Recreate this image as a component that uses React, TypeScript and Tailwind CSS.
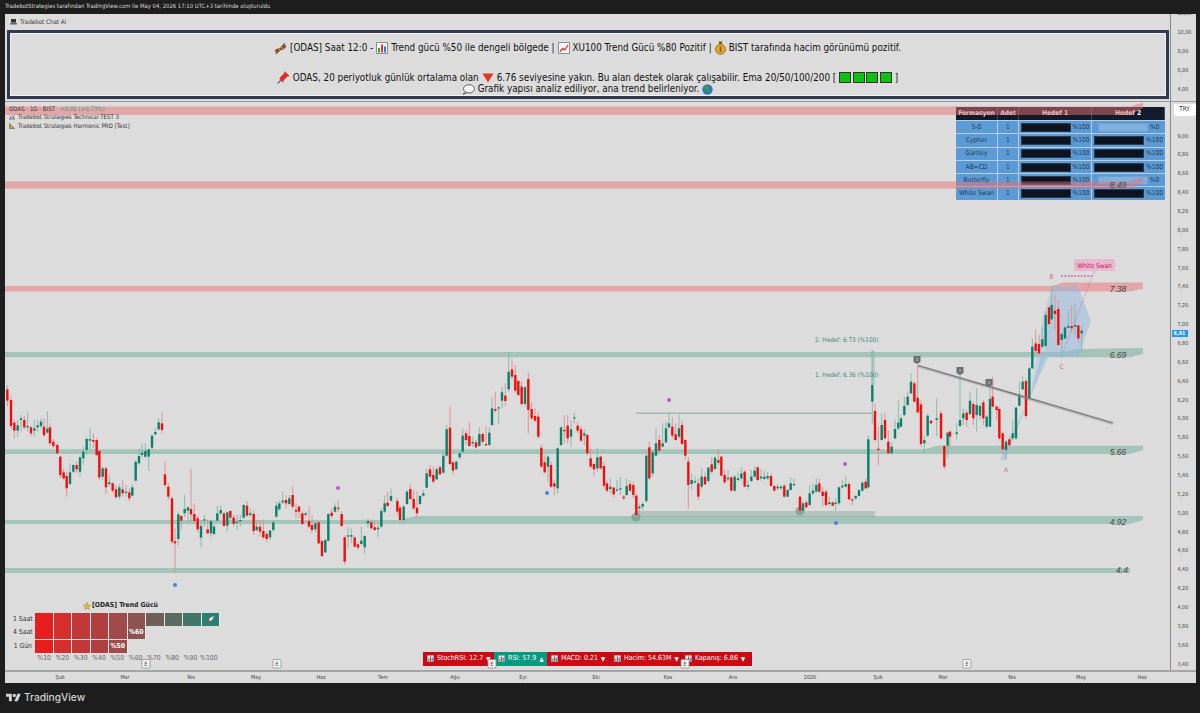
type Candle = [number, number, number, number, number?, number?];

// zx, top, bottom, red(1)/green(0), wick top, wick bottom (in zoom coords, 3x)
const partA: Candle[] = [
  [22,148,182,1,135,200],[33,180,258,1],[43,248,272,1,240,295],[53,256,272,0,240,292],[63,235,240,0,225,275],[73,240,262,1],[83,258,262,0,215,275],[93,262,280,1],[103,265,272,0,240,290],[113,256,262,0,240,275],[123,245,258,0,235,265],[132,260,286,1,235,290],[142,266,278,0,213,280],[150,262,310,1],[160,305,318,1],[172,315,340,1],[181,350,405,1],[191,397,415,1],[200,408,445,1,395,470],[210,397,432,0,370,435],[220,375,395,0],[230,375,388,1,365,400],[240,352,395,0,345,410],[250,335,355,0,318,375],[260,297,330,0,290,345],[270,297,302,0,263,330],[280,300,305,1,280,325],[290,300,345,1],[298,333,412,1],[308,385,410,0,380,420],[318,385,442,1,380,462],[328,427,432,0,405,440],[338,430,452,1],[348,448,472,1],[358,442,470,0],[368,448,460,1,420,470],[378,455,458,0,435,470],[388,457,475,1],[397,442,467,0,432,470],[407,366,422,0],[417,348,370,0,325,375],[426,338,345,0,310,352],[436,333,350,0,310,355],[446,328,350,0,325,392],[456,287,323,0],[466,276,283,0],[476,247,268,0,235,272],[486,250,270,1,215,282],
  [495,403,435,1,363,440],[505,440,470,1],[516,475,605,1],[525,604,610,1,565,697],[535,523,597,0,515,615],[544,528,542,1,525,570],[554,507,520,0,465,530],[564,502,512,0,500,548],[573,507,523,1,385,545],[583,522,543,1,490,550],[593,535,568,1],[603,558,593,0,540,623],[613,538,540,0,525,560],[623,568,580,1,538,582],[633,543,580,0,540,590],[642,560,582,0],[652,520,542,0,498,545],[662,510,520,0,497,525],[672,520,558,1,515,560],[682,517,557,0,515,575],[691,513,533,1],[701,533,552,1,525,560],[711,545,546,0,525,570],[721,540,542,0,525,560],[731,495,533,0],[741,497,527,1,482,530],[751,520,525,0,505,530],[761,522,573,1,510,585],[770,560,570,0,540,575],[780,560,575,1,540,590],[790,573,592,1,538,598],[800,582,597,1,575,607],[810,572,592,0,570,600],[820,547,570,0,540,575],[829,497,530,0,485,535],[838,490,508,0,483,512],[848,482,487,0,455,492],[858,480,490,1,465,505],[868,475,492,0,465,495],[878,465,500,1,438,505],[888,510,515,1,490,535],[897,500,515,1,497,535],[907,520,552,1,515,555],[917,520,525,0,515,530],[927,543,560,1,500,565],[936,555,570,1,525,580],[946,550,568,0,545,575],[956,547,610,1,545,612],[966,603,648,1],[976,600,637,0,595,640],[985,522,602,0,520,605],[995,518,528,1,505,535],[1005,500,515,0,490,518],[1015,503,506,1,482,515],[1025,522,558,1],[1034,592,665,1],[1044,586,590,0,560,622],[1054,585,590,0,565,610],[1064,592,620,1,590,623],[1074,613,623,1],[1084,602,612,0,560,615],[1094,588,622,0,585,642],[1104,543,550,0,535,563],[1114,547,565,1,542,568],[1124,562,570,1,545,572],[1134,563,568,0,548,592],[1144,513,560,0],[1154,490,515,0,467,520],[1163,488,498,1,455,500],[1173,468,482,0,445,485],[1192,483,515,1],
];

const partB: Candle[] = [
  [0,503,540,1],[11,500,540,0,495,550],[21,455,492,0,450,495],[31,447,477,1,432,480],[41,477,505,1,450,510],[51,503,520,1,455,532],[60,468,492,0,465,495],[70,460,467,0,450,470],[80,400,443,0,385,445],[90,388,410,1,375,415],[100,405,425,1,380,430],[110,388,418,0,382,420],[120,382,403,1,375,405],[130,347,398,0,335,400],[140,268,347,0,255,350],[150,263,372,1,200,375],[159,367,392,1,365,405],[169,365,388,0,362,390],[179,340,352,0,335,358],[188,287,335,0,265,338],[198,280,300,1,270,315],[208,288,318,1,245,320],[218,306,310,0,290,320],[228,307,322,1,300,325],[238,282,318,0,262,320],[248,282,305,1,278,310],[258,312,316,1,258,318],[268,278,315,0,262,318],[276,205,255,0,172,258],[286,207,212,1,155,218],[296,202,205,0,198,252],[306,157,182,0,140,205],[316,167,183,1,130,198],[326,95,148,0,37,155],[336,88,110,1,58,118],[346,105,152,1,75,158],[355,123,165,1,120,168],[365,140,192,1,125,198],[375,142,192,0,138,200],[385,117,210,1,97,280],[395,207,235,1,188,240],[405,228,242,1,205,245],[415,230,290,1],
  [424,323,380,1],[434,367,397,1,345,400],[444,350,380,0,345,425],[453,375,440,1],[463,430,440,1,420,465],[473,325,445,0,322,462],[483,262,315,0],[493,270,272,1,225,310],[503,257,295,1,225,310],[513,268,290,0,240,320],[523,232,235,0,218,250],[533,257,272,1,245,280],[543,268,302,1],[553,280,287,0,268,315],[562,285,340,1],[572,355,380,1,325,385],[582,372,388,1,368,410],[592,352,385,0,325,395],[602,350,385,1],[612,378,437,1],[621,430,452,1],[631,440,447,0,415,460],[641,443,463,1],[651,448,450,0,420,455],[661,445,448,0,410,465],[671,470,475,1,465,480],[680,438,465,0,415,468],[690,432,452,1],[700,435,465,1],[709,467,525,1],[718,500,505,0,490,520],[728,492,500,0,485,510],[739,347,483,0],[748,322,415,1,305,420],[758,337,400,0],[768,310,347,0,265,350],[778,300,332,1,285,335],[788,310,320,0,250,322],[798,265,307,0,245,310],[807,250,262,0,218,265],[817,260,287,1,232,295],[827,283,300,1,250,302],[837,265,290,0,225,295],[846,255,312,1,240,315],[856,300,347,1,298,358],[865,365,435,1,350,505],[875,420,432,0,402,450],[885,423,427,0,408,432],[895,430,470,1,415,480],[905,410,440,0,385,445],[915,410,433,1,395,435],[925,383,423,0,380,428],[935,373,395,1,352,400],[945,353,387,0,348,390],[955,360,368,1,328,375],[964,350,407,1,348,410],[974,405,427,1,388,432],[984,413,418,0,390,425],[994,412,452,1,408,456],[1004,410,452,0,405,456],[1014,415,420,0,395,425],[1024,400,415,0,382,422],[1034,395,440,1,390,442],[1044,435,440,0,422,450],[1054,410,423,0,390,426],[1064,392,410,0,380,412],[1073,382,420,1,378,424],[1083,410,415,0,388,422],[1093,410,417,0,392,420],[1103,408,415,0,395,420],[1113,408,438,1,400,440],[1123,438,452,1,436,455],[1133,440,445,0,432,450],[1143,440,445,0,435,450],[1153,437,470,1,432,472],[1163,450,470,0,447,473],[1172,430,450,0,412,452],[1182,432,435,0,415,440],
];

const partC: Candle[] = [
  [60,80,122,1],[69,100,122,0,95,125],[79,97,112,1,92,115],[89,70,105,0,45,108],[99,62,70,0,40,75],[109,45,65,0,25,68],[118,40,65,1,25,68],[128,65,78,1,50,110],[138,65,105,1,60,110],[148,97,102,0,80,108],[158,97,107,1,95,110],[167,98,102,0,85,122],[177,52,100,0,50,105],[187,47,52,0,30,55],[197,42,50,0,18,52],[207,42,88,1],[217,88,90,1,85,105],[227,78,85,0,75,90],[237,60,78,0,58,80],[247,38,62,0,35,65],[257,35,55,1,25,58],
];

const partD: Candle[] = [
  [205,568,712,0],[217,405,455,0,300,520],[225,483,570,1,460,575],[235,596,600,1,530,648],[245,525,570,0,490,572],[255,510,565,1,488,568],[265,575,610,1,540,612],[275,590,610,0,575,612],[285,537,565,0,510,568],[295,518,535,0,450,540],[303,505,530,0,495,532],[313,468,495,0,440,498],[323,440,465,0,425,468],[333,395,430,0,370,432],[343,400,455,1,395,458],[353,443,487,1,345,490],[363,463,582,1],[373,570,580,0,560,610],[383,497,557,0,490,560],[393,512,520,1,510,522],[410,505,510,0,445,558],[423,490,565,1],[433,588,650,1,585,658],[443,548,587,0,545,625],[450,545,560,1,540,590],[470,547,552,0,518,568],[480,510,528,0,350,530],[490,490,505,0,475,525],[500,488,510,1,480,530],[510,452,492,0,425,495],[520,462,505,1,455,525],[530,465,495,0,415,545],[540,468,497,0,460,510],[550,457,505,1,450,525],[560,500,530,0,495,535],[570,447,530,0,415,532],[578,440,470,1,380,472],[590,470,480,1,465,510],[598,477,565,1],[608,550,598,1,545,610],[618,575,600,0,570,630],[628,568,585,1],[638,550,565,0,510,570],[648,473,565,0,470,570],[658,433,467,0,395,470],[668,395,418,0,380,420],[678,393,498,1],[688,355,445,0,350,450],[697,290,355,0,265,358],[707,280,303,1,238,315],[717,282,310,1,255,315],[727,268,290,0,230,295],[737,195,288,0,185,290],[747,172,222,1,170,225],[755,165,208,0,108,210],[765,182,192,1,135,240],[775,177,285,1,150,288],[785,252,270,0,248,320],[795,232,265,0,230,268],[805,228,233,0,180,235],[815,228,235,1,165,245],[825,225,230,0,160,255],[835,226,265,1,225,278],[845,242,250,0,228,307],
];

const candles = [
  ...partA.map((c) => ({ c, ox: 0, oy: 340 })),
  ...partB.map((c) => ({ c, ox: 400, oy: 340 })),
  ...partC.map((c) => ({ c, ox: 780, oy: 470 })),
  ...partD.map((c) => ({ c, ox: 800, oy: 250 })),
];

const priceLabels = ["9,00","8,80","8,60","8,40","8,20","8,00","7,80","7,60","7,40","7,20","7,00","6,80","6,60","6,40","6,20","6,00","5,80","5,60","5,40","5,20","5,00","4,80","4,60","4,40","4,20","4,00","3,80","3,60","3,40"];

const months = [
  { t: "Şub", c: "ml-[35px]" }, { t: "Mar", c: "ml-[25px]" }, { t: "Nis", c: "ml-[26px]" }, { t: "May", c: "ml-[25px]" },
  { t: "Haz", c: "ml-[25px]" }, { t: "Tem", c: "ml-[22px]" }, { t: "Ağu", c: "ml-[32px]" }, { t: "Eyl", c: "ml-[28px]" },
  { t: "Eki", c: "ml-[33px]" }, { t: "Kas", c: "ml-[32px]" }, { t: "Ara", c: "ml-[25px]" }, { t: "2026", c: "ml-[37px]" },
  { t: "Şub", c: "ml-[28px]" }, { t: "Mar", c: "ml-[25px]" }, { t: "Nis", c: "ml-[29px]" }, { t: "May", c: "ml-[29px]" }, { t: "Haz", c: "ml-[21px]" },
];

const patterns = [
  { name: "5-0", a: 100, b: 0 }, { name: "Cypher", a: 100, b: 100 }, { name: "Gartley", a: 100, b: 100 },
  { name: "AB=CD", a: 100, b: 100 }, { name: "Butterfly", a: 100, b: 0 }, { name: "White Swan", a: 100, b: 100 },
];

const heat = ["bg-[#e81e1e]", "bg-[#d42e2e]", "bg-[#c23838]", "bg-[#b04040]", "bg-[#a04a4a]", "bg-[#8a5450]", "bg-[#6f5f58]", "bg-[#5b6a60]", "bg-[#40766a]", "bg-[#2a8070]"];

const strip = [
  { t: "StochRSI: 12.7", up: false, w: "w-[71px]" },
  { t: "RSI: 57.9", up: true, w: "w-[53px]" },
  { t: "MACD: 0.21", up: false, w: "w-[63px]" },
  { t: "Hacim: 54.63M", up: false, w: "w-[71px]" },
  { t: "Kapanış: 6.86", up: false, w: "w-[71px]" },
];

const BarsIcon = ({ s = 12 }: { s?: number }) => (
  <svg width={s} height={s} viewBox="0 0 12 12" className="shrink-0">
    <rect x="0.5" y="0.5" width="11" height="11" fill="#f4f4f4" stroke="#8a8f99" />
    <rect x="2" y="6" width="2" height="4.5" fill="#2eaa3a" />
    <rect x="5" y="2.5" width="2" height="8" fill="#e5342e" />
    <rect x="8" y="4.5" width="2" height="6" fill="#2f7fd8" />
  </svg>
);

const TrendIcon = () => (
  <svg width="12" height="12" viewBox="0 0 12 12" className="shrink-0">
    <rect x="0.5" y="0.5" width="11" height="11" fill="#f4f4f4" stroke="#8a8f99" />
    <path d="M2 9.5 5 6.5 6.8 8 10 3" fill="none" stroke="#e0352e" strokeWidth="1.3" />
  </svg>
);

const DnaIcon = () => (
  <svg width="13" height="13" viewBox="0 0 13 13" className="shrink-0">
    <path d="M1.5 9.5C4 6 8 9 11.5 3.5" fill="none" stroke="#b5392c" strokeWidth="2.6" />
    <path d="M1.5 11.5C5 10 8 4 11 1.5" fill="none" stroke="#4a6a3a" strokeWidth="1.6" />
    <path d="M4 6l3 3M6.5 4.5l2.5 2.5" stroke="#e8b64a" strokeWidth="1" />
  </svg>
);

const CoinIcon = () => (
  <svg width="11" height="14" viewBox="0 0 11 14" className="shrink-0">
    <path d="M3.5 0.5h4L6.8 3H4.2z" fill="#7a5a1e" />
    <circle cx="5.5" cy="8.3" r="5" fill="#e7a920" stroke="#8a5f12" strokeWidth="0.8" />
    <rect x="4.7" y="5.5" width="1.6" height="5.5" fill="#7a5a1e" />
  </svg>
);

const PinIcon = () => (
  <svg width="13" height="13" viewBox="0 0 13 13" className="shrink-0">
    <path d="M0.5 12.5 5 8" stroke="#666" strokeWidth="1.2" />
    <path d="M3.2 6.2 7.5 2 7 0.8l1-0.3 4.3 4.3-0.4 1-1.2-.5-4.2 4.3.2 1.4-1 .5L2.3 7.2z" fill="#e52a20" />
  </svg>
);

const GlobeIcon = () => (
  <svg width="11" height="11" viewBox="0 0 11 11" className="shrink-0">
    <circle cx="5.5" cy="5.5" r="5.2" fill="#2f78c8" />
    <path d="M2 2.5C4 1 6 1.5 7 2.5L6.5 5 8 6.5 6 9.5 4.5 7 2.5 5.5z" fill="#3d9a3f" />
  </svg>
);

const BubbleIcon = () => (
  <svg width="13" height="11" viewBox="0 0 13 11" className="shrink-0">
    <ellipse cx="7" cy="4.8" rx="5.5" ry="4.1" fill="#f7f7f7" stroke="#444" strokeWidth="0.8" />
    <path d="M3.5 8 1 10.3 5 8.7" fill="#f7f7f7" stroke="#444" strokeWidth="0.8" />
  </svg>
);

const Square = () => <span className="w-[12px] h-[11px] bg-[#10c010] border border-[#333] shrink-0" />;

const HedefBar = ({ v }: { v: number }) => (
  <div className="flex items-center justify-center gap-[2px]">
    <div className={v > 0 ? "w-[50px] h-[9px] bg-[#0d1420] border border-[#2a3a50]" : "w-[50px] h-[9px] bg-[#7fb0de] border border-[#6fa0d0]"} />
    <span className="text-[#23364d]">%{v}</span>
  </div>
);

const sans = "DejaVu Sans Condensed, DejaVu Sans, sans-serif";

export default function App() {
  return (
    <div className="w-[1200px] h-[713px] flex flex-col bg-[#1e1e1e] overflow-hidden font-['DejaVu_Sans_Condensed','DejaVu_Sans',sans-serif]">
      <div className="h-[13.5px] flex items-center pl-[5px] text-[5.9px] text-[#d8d8d8] leading-none whitespace-nowrap">
        TradebotStrategies tarafından TradingView.com ile May 04, 2026 17:10 UTC+3 tarihinde oluşturuldu
      </div>

      <div className="ml-[5px] w-[1190.5px] h-[669.5px] flex flex-col bg-[#dcdcdc] text-[#333]">
        {/* ust panel: chat */}
        <div className="h-[88.5px] flex border-b border-[#999] shrink-0">
          <div className="w-[1164.5px] flex flex-col">
            <div className="h-[16.5px] flex items-center gap-[3px] pl-[5px] text-[6.2px] text-[#333]">
              <svg width="7" height="7" viewBox="0 0 7 7"><rect x="1" y="1" width="5" height="3.6" fill="#333" /><rect y="5" width="7" height="1.5" fill="#666" /></svg>
              Tradebot Chat AI
            </div>
            <div className="ml-[1.5px] mr-[1px] h-[69px] border-[3.5px] border-[#2f3a50] outline outline-[#f2f2f2] -outline-offset-[4.5px] flex flex-col items-center text-[#111] text-[9.8px] leading-[12px]">
              <div className="mt-[8px] flex items-center gap-[3px] whitespace-nowrap">
                <DnaIcon /><span>[ODAS] Saat 12:0 -</span><BarsIcon /><span>Trend gücü %50 ile dengeli bölgede |</span><TrendIcon /><span>XU100 Trend Gücü %80 Pozitif |</span><CoinIcon /><span>BIST tarafında hacim görünümü pozitif.</span>
              </div>
              <div className="mt-[16px] flex items-center gap-[3px] whitespace-nowrap">
                <PinIcon /><span>ODAS, 20 periyotluk günlük ortalama olan</span>
                <svg width="12" height="10" viewBox="0 0 12 10" className="shrink-0"><path d="M0.5 0.5h11L6 9.5z" fill="#e33b22" /></svg>
                <span>6.76 seviyesine yakın. Bu alan destek olarak çalışabilir. Ema 20/50/100/200 [</span>
                <div className="flex gap-[1.5px]"><Square /><Square /><Square /><Square /></div><span>]</span>
              </div>
              <div className="-mt-[1px] flex items-center gap-[3px] whitespace-nowrap">
                <BubbleIcon /><span>Grafik yapısı analiz ediliyor, ana trend belirleniyor.</span><GlobeIcon />
              </div>
            </div>
          </div>
          <div className="flex-1 border-l border-[#888] overflow-hidden text-[5.4px] text-[#444] pl-[7px]">
            <div className="-mt-[9.5px] flex flex-col">
              {["10,00", "10,00", "8,00", "6,00", "4,00"].map((p, i) => (
                <span key={i} className="h-[18.8px] flex items-center">{p}</span>
              ))}
            </div>
          </div>
        </div>

        {/* ana grafik */}
        <div className="h-[568px] flex shrink-0">
          <div className="relative w-[1164.5px] h-full overflow-hidden">
            <div className="absolute left-[4px] top-[3px] text-[6.1px] leading-[8.3px] text-[#333] z-10 whitespace-nowrap">
              <div>ODAS · 1G · BIST <span className="ml-[3px] text-[#3f9a84]">+0,05 (+0,73%)</span></div>
              <div className="flex items-center gap-[3px]"><BarsIcon s={6} />Tradebot Strategies Technical TEST 3</div>
              <div className="flex items-center gap-[3px]">
                <svg width="6" height="6" viewBox="0 0 6 6"><path d="M0.5 0.5v5h5z" fill="#d99a1e" stroke="#444" strokeWidth="0.5" /></svg>
                Tradebot Strategies Harmonic PRO [Test]
              </div>
            </div>

            {/* formasyon tablosu */}
            <div className="absolute left-[951px] top-[5px] w-[209px] text-[6.6px] leading-none bg-[#b9cde0] grid grid-cols-[42px_21px_73px_73px]">
              {["Formasyon", "Adet", "Hedef 1", "Hedef 2"].map((h) => (
                <div key={h} className="h-[13px] flex items-center justify-center bg-[#131a2b] text-white font-bold border-r border-[#3a4a60]">{h}</div>
              ))}
              {patterns.map((p) => (
                <div key={p.name} className="contents">
                  <div className="h-[13.3px] flex items-center justify-center bg-[#5b9bd5] text-[#1f3550] border-r border-t border-[#b9cde0] whitespace-nowrap">{p.name}</div>
                  <div className="h-[13.3px] flex items-center justify-center bg-[#5b9bd5] text-[#1f3550] border-r border-t border-[#b9cde0]">1</div>
                  <div className="h-[13.3px] flex items-center justify-center bg-[#5b9bd5] border-r border-t border-[#b9cde0]"><HedefBar v={p.a} /></div>
                  <div className="h-[13.3px] flex items-center justify-center bg-[#5b9bd5] border-t border-[#b9cde0]"><HedefBar v={p.b} /></div>
                </div>
              ))}
            </div>

            {/* trend gucu */}
            <div className="absolute left-[8px] top-[498px] text-[6.8px] leading-none whitespace-nowrap">
              <div className="flex items-center justify-start gap-[1px] ml-[70px] h-[11px] font-bold text-[#222]">
                <svg width="8" height="8" viewBox="0 0 10 10"><path d="M5 0.5 6.4 3.6 9.7 4 7.2 6.2 7.9 9.5 5 7.8 2.1 9.5 2.8 6.2 0.3 4 3.6 3.6z" fill="#e8b923" stroke="#8a7a3a" strokeWidth="0.5" /></svg>
                [ODAS] Trend Gücü
              </div>
              <div className="flex flex-col gap-[0.5px] mt-[1.5px]">
                {[{ l: "1 Saat", n: 10, m: "" }, { l: "4 Saat", n: 6, m: "%60" }, { l: "1 Gün", n: 5, m: "%50" }].map((r) => (
                  <div key={r.l} className="flex items-center h-[13px]">
                    <span className="w-[22px] text-right text-[#333] pr-[3px]">{r.l}</span>
                    {heat.slice(0, r.n).map((c, i) => (
                      <div key={i} className={"w-[18.5px] h-full border-r border-[#e8e8e8] flex items-center justify-center font-bold text-white " + c}>
                        {i === r.n - 1 && r.m}
                        {r.n === 10 && i === 9 && (
                          <svg width="9" height="9" viewBox="0 0 9 9"><path d="M8 1C5.5 1.3 3.6 3 2.8 4.6L4.4 6.2C6 5.4 7.7 3.5 8 1z" fill="#f2f2f2" stroke="#555" strokeWidth="0.4" /><path d="M2.6 5 1 8 4 6.4z" fill="#e0452c" /></svg>
                        )}
                      </div>
                    ))}
                  </div>
                ))}
              </div>
              <div className="flex ml-[22px] mt-[2px] text-[#666]">
                {["%10", "%20", "%30", "%40", "%50", "%60", "%70", "%80", "%90", "%100"].map((t) => (
                  <span key={t} className="w-[18.3px] text-center">{t}</span>
                ))}
              </div>
            </div>

            {/* indikator seridi */}
            <div className="absolute left-[418px] top-[550px] flex h-[13.5px] text-[7px] text-white leading-none">
              {strip.map((s) => (
                <div key={s.t} className={s.w + " flex items-center gap-[3px] pl-[4px] whitespace-nowrap " + (s.up ? "bg-[#089981]" : "bg-[#cc0a14] border-r border-[#9c1020]")}>
                  <BarsIcon s={7} />
                  <span>{s.t}</span>
                  <span className="text-[6px]">{s.up ? "▲" : "▼"}</span>
                </div>
              ))}
            </div>

            <svg viewBox="5 102 1164.5 568" width="1164.5" height="568" className="absolute left-0 top-0 pointer-events-none">
              {/* kirmizi bolgeler */}
              <g fill="#e87070" fillOpacity="0.5">
                <path d="M5 106.5H1130L1143 102.5V108L1130 115H5z" />
                <path d="M5 181.5H1130L1143 177V183L1130 188.5H5z" />
                <path d="M5 286H1052L1063 282.5H1143V288.7L1130 291.6H5z" />
              </g>
              {/* yesil bolgeler */}
              <g fill="#7fb3a2" fillOpacity="0.6">
                <path d="M5 352H1062L1078 349L1143 348V354L1130 357.3H5z" />
                <path d="M5 449.3H925L937 445.7H1143V450L1130 454H5z" />
                <path d="M5 520H400L415 516H1143V520L1130 524H5z" />
                <rect x="5" y="568" width="1125" height="5" />
                <rect x="871" y="351" width="4" height="34" fillOpacity="0.4" />
              </g>
              <rect x="636" y="511" width="239" height="6" fill="#8fa8a0" fillOpacity="0.5" />
              <rect x="636" y="412.5" width="236" height="1.5" fill="#a3b8b0" />
              <circle cx="636" cy="517" r="4.5" fill="#6d9a8c" fillOpacity="0.7" />
              <circle cx="800" cy="511" r="4.5" fill="#6d9a8c" fillOpacity="0.7" />

              {/* white swan */}
              <g fill="#8fb6de" fillOpacity="0.5">
                <path d="M1052 286H1078L1091 321L1078 357H1045L1048 320z" />
                <path d="M1000 460 1005 460 1030 397 1048 357 1041 357 1030 397z" />
                <path d="M1030 397 1045 357 1052 286 1043 315z" fillOpacity="0.3" />
              </g>

              {/* mumlar */}
              {candles.map(({ c, ox, oy }, i) => {
                const [zx, t, b, red, wt, wb] = c;
                const x = ox + zx / 3;
                const top = oy + t / 3;
                const bot = oy + b / 3;
                const up = wt !== undefined ? oy + wt / 3 : top - 1 - (i * 7) % 4;
                const dn = wb !== undefined ? oy + wb / 3 : bot + 1 + (i * 5) % 3;
                return (
                  <g key={i}>
                    <line x1={x} x2={x} y1={up} y2={dn} stroke={red ? "#e58a8a" : "#7fb8a8"} strokeWidth="0.9" />
                    <rect x={x - 1.2} y={top} width="2.4" height={Math.max(bot - top, 1.2)} fill={red ? "#f20d0d" : "#0b7f6a"} />
                  </g>
                );
              })}

              {/* trend cizgisi */}
              <line x1="918" y1="366" x2="1113" y2="423.5" stroke="#8a8a8a" strokeOpacity="0.4" strokeWidth="3" />
              <line x1="918" y1="365.5" x2="1113" y2="423" stroke="#777" strokeWidth="1.3" />
              {[[917, 360], [960, 371], [989, 383]].map(([x, y], i) => (
                <g key={i}>
                  <path d={"M" + (x - 3.5) + " " + (y - 4) + "h7v6l-3.5 2-3.5-2z"} fill="#6f6f73" />
                  <text x={x} y={y + 0.5} fontSize="4" fill="#ddd" textAnchor="middle" fontFamily={sans}>{i === 0 ? "4" : "3"}</text>
                </g>
              ))}

              {/* pink harmonik */}
              <path d="M1063 352 1094 272" stroke="#d9639c" strokeWidth="0.8" strokeDasharray="1.5 1.5" fill="none" />
              <path d="M1061 276H1092" stroke="#d9639c" strokeWidth="1.5" strokeDasharray="2 1.3" fill="none" />
              <rect x="1074" y="259" width="41" height="12" rx="1" fill="#e9b7cf" />
              <path d="M1092 271 1094 274 1097 271z" fill="#e9b7cf" />
              <g fontFamily={sans} fontSize="6.5" fill="#d9639c">
                <text x="1094.5" y="267.5" textAnchor="middle" fill="#c2185b">White Swan</text>
                <text x="1051.5" y="278.5" textAnchor="middle">B</text>
                <text x="1061.5" y="368.5" textAnchor="middle">C</text>
                <text x="1006" y="471.5" textAnchor="middle">A</text>
              </g>

              {/* seviye etiketleri */}
              <g fontFamily="Liberation Sans, sans-serif" fontSize="8.5" fontStyle="italic" fill="#444" textAnchor="middle">
                <text x="1118" y="187.5">8.49</text>
                <text x="1118" y="291.5">7.38</text>
                <text x="1118" y="357.5">6.69</text>
                <text x="1118" y="454.5">5.66</text>
                <text x="1118" y="524.5">4.92</text>
                <text x="1122" y="573">4.4</text>
              </g>
              <g fontFamily={sans} fontSize="6.4" fill="#3c8b77">
                <text x="815" y="342">2. Hedef: 6.73 (%100)</text>
                <text x="815" y="377">1. Hedef: 6.36 (%100)</text>
              </g>

              {/* noktalar */}
              {[[338, 488], [669, 400], [845, 464]].map(([x, y]) => <circle key={x} cx={x} cy={y} r="2" fill="#cf4fe8" />)}
              {[[175, 585], [547, 493], [836, 523]].map(([x, y]) => <circle key={x} cx={x} cy={y} r="2" fill="#4f7fd8" />)}

              {/* earnings */}
              {[146, 277, 492, 685, 967].map((x) => (
                <g key={x}>
                  <rect x={x - 4} y="659.5" width="8" height="8.5" rx="0.8" fill="#f6f6f6" stroke="#8f8f8f" strokeWidth="0.8" />
                  <text x={x} y="666" fontSize="6" textAnchor="middle" fill="#444" fontFamily={sans}>E</text>
                </g>
              ))}
            </svg>
          </div>

          <div className="relative flex-1 border-l border-[#888] text-[5.4px] text-[#444] pl-[7px] pt-[24.2px] overflow-hidden">
            <div className="absolute left-[3px] top-[2px] w-[22px] h-[12px] rounded-[2px] bg-white flex items-center justify-center text-[6.4px] text-[#333]">TRY</div>
            <div className="absolute left-[1px] top-[228px] w-[16px] h-[7px] bg-[#2196f3] text-white font-bold flex items-center justify-center">6,91</div>
            {priceLabels.map((p) => (
              <div key={p} className="h-[18.87px] flex items-center">{p}</div>
            ))}
          </div>
        </div>

        {/* zaman ekseni */}
        <div className="flex-1 flex items-center border-t-2 border-[#a5a5a5] text-[5.4px] text-[#444]">
          {months.map((m, i) => (
            <span key={i} className={"w-[40px] text-center shrink-0 " + m.c}>{m.t}</span>
          ))}
        </div>
      </div>

      <div className="flex-1 flex items-center gap-[3px] pl-[6px] pb-[1px] text-[#d4d4d4]">
        <svg width="15" height="12" viewBox="0 0 36 28" fill="currentColor">
          <path d="M14 22H7V11H0V4h14v18zM28 22h-8l7.5-18h8L28 22z" />
          <circle cx="20" cy="8" r="4" />
        </svg>
        <span className="text-[10.2px] font-medium font-['Inter',sans-serif]">TradingView</span>
      </div>
    </div>
  );
}
